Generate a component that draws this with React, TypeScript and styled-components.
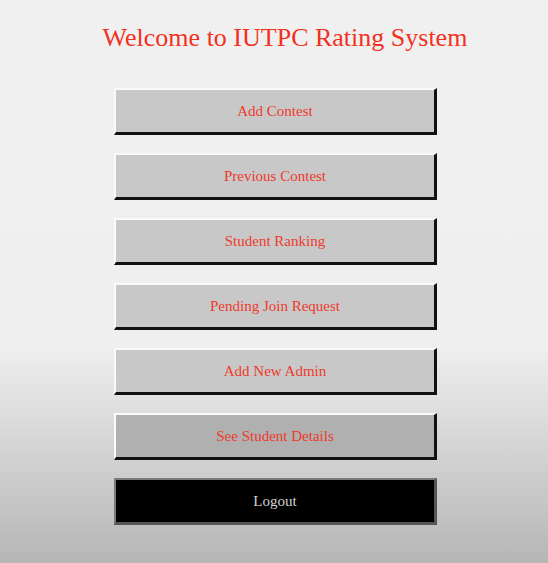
import React from 'react';
import styled, { createGlobalStyle } from 'styled-components';

const GlobalStyle = createGlobalStyle`
  html, body {
    margin: 0;
    padding: 0;
  }
  body {
    min-height: 563px;
    background: linear-gradient(
      to bottom,
      #f0f0f0 0,
      #efefef 345px,
      #b6b6b6 563px
    );
    font-family: 'Liberation Serif', 'DejaVu Serif', serif;
  }
`;

const Page = styled.div`
  display: flex;
  flex-direction: column;
  align-items: center;
  padding-top: 22px;
`;

const Title = styled.h1`
  margin: 0 0 0 22px;
  font-family: 'Liberation Serif', 'DejaVu Serif', serif;
  font-weight: normal;
  font-size: 26px;
  line-height: 32px;
  color: #f2311f;
`;

const Menu = styled.div`
  display: flex;
  flex-direction: column;
  gap: 18px;
  margin-top: 34px;
  margin-left: 3px;
`;

const MenuButton = styled.button<{ $variant?: 'normal' | 'active' | 'dark' }>`
  width: 323px;
  height: 47px;
  box-sizing: border-box;
  border-style: solid;
  border-width: 2px 3px 3px 2px;
  border-color: ${p =>
    p.$variant === 'dark' ? '#7a7a7a #555 #555 #7a7a7a' : '#fafafa #111 #111 #fafafa'};
  background: ${p =>
    p.$variant === 'dark' ? '#000' : p.$variant === 'active' ? '#b0b0b0' : '#c8c8c8'};
  color: ${p => (p.$variant === 'dark' ? '#d2d2d2' : '#ee3a2c')};
  font-family: 'Liberation Serif', 'DejaVu Serif', serif;
  font-size: 15px;
  padding: 0;
  cursor: pointer;
`;

const items = [
  'Add Contest',
  'Previous Contest',
  'Student Ranking',
  'Pending Join Request',
  'Add New Admin',
];

function App(): JSX.Element {
  return (
    <>
      <GlobalStyle />
      <Page>
        <Title>Welcome to IUTPC Rating System</Title>
        <Menu>
          {items.map(label => (
            <MenuButton key={label}>{label}</MenuButton>
          ))}
          <MenuButton $variant="active">See Student Details</MenuButton>
          <MenuButton $variant="dark">Logout</MenuButton>
        </Menu>
      </Page>
    </>
  );
}

export default App;
